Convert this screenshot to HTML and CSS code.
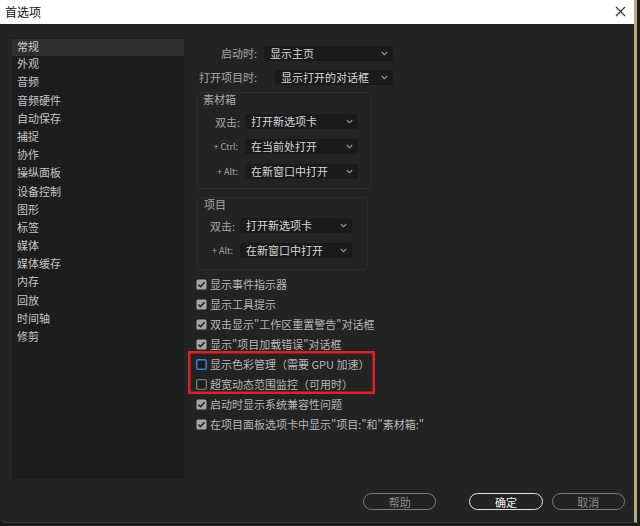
FILE: index.html
```html
<!DOCTYPE html>
<html lang="zh-CN">
<head>
    <meta charset="UTF-8">
    <meta name="viewport" content="width=device-width, initial-scale=1.0">
    <title>首选项</title>
    <link rel="stylesheet" href="styles.css">
</head>
<body>
    <div class="window">
        <div class="titlebar">
            <span class="title">首选项</span>
            <svg class="close" width="11" height="11" viewBox="0 0 11 11"><path d="M1 1 L10 10 M10 1 L1 10" stroke="#333" stroke-width="1.1" fill="none"/></svg>
        </div>

        <div class="main">
            <ul class="nav">
                <li class="active">常规</li>
                <li>外观</li>
                <li>音频</li>
                <li>音频硬件</li>
                <li>自动保存</li>
                <li>捕捉</li>
                <li>协作</li>
                <li>操纵面板</li>
                <li>设备控制</li>
                <li>图形</li>
                <li>标签</li>
                <li>媒体</li>
                <li>媒体缓存</li>
                <li>内存</li>
                <li>回放</li>
                <li>时间轴</li>
                <li>修剪</li>
            </ul>

            <div class="panel">
                <div class="row">
                    <span class="label">启动时:</span>
                    <div class="select w1">显示主页<svg class="chev" width="7" height="5" viewBox="0 0 7 5"><path d="M0.8 1 L3.5 3.8 L6.2 1" stroke="#9a9a9a" stroke-width="1.1" fill="none"/></svg></div>
                </div>
                <div class="row">
                    <span class="label">打开项目时:</span>
                    <div class="select w2">显示打开的对话框<svg class="chev" width="7" height="5" viewBox="0 0 7 5"><path d="M0.8 1 L3.5 3.8 L6.2 1" stroke="#9a9a9a" stroke-width="1.1" fill="none"/></svg></div>
                </div>

                <div class="group bin">
                    <div class="group-title">素材箱</div>
                    <div class="grow">
                        <span class="glabel">双击:</span>
                        <div class="select gsel">打开新选项卡<svg class="chev" width="7" height="5" viewBox="0 0 7 5"><path d="M0.8 1 L3.5 3.8 L6.2 1" stroke="#9a9a9a" stroke-width="1.1" fill="none"/></svg></div>
                    </div>
                    <div class="grow">
                        <span class="glabel small">+ Ctrl:</span>
                        <div class="select gsel">在当前处打开<svg class="chev" width="7" height="5" viewBox="0 0 7 5"><path d="M0.8 1 L3.5 3.8 L6.2 1" stroke="#9a9a9a" stroke-width="1.1" fill="none"/></svg></div>
                    </div>
                    <div class="grow">
                        <span class="glabel small">+ Alt:</span>
                        <div class="select gsel">在新窗口中打开<svg class="chev" width="7" height="5" viewBox="0 0 7 5"><path d="M0.8 1 L3.5 3.8 L6.2 1" stroke="#9a9a9a" stroke-width="1.1" fill="none"/></svg></div>
                    </div>
                </div>

                <div class="group project">
                    <div class="group-title">项目</div>
                    <div class="grow">
                        <span class="glabel">双击:</span>
                        <div class="select gsel">打开新选项卡<svg class="chev" width="7" height="5" viewBox="0 0 7 5"><path d="M0.8 1 L3.5 3.8 L6.2 1" stroke="#9a9a9a" stroke-width="1.1" fill="none"/></svg></div>
                    </div>
                    <div class="grow">
                        <span class="glabel small">+ Alt:</span>
                        <div class="select gsel">在新窗口中打开<svg class="chev" width="7" height="5" viewBox="0 0 7 5"><path d="M0.8 1 L3.5 3.8 L6.2 1" stroke="#9a9a9a" stroke-width="1.1" fill="none"/></svg></div>
                    </div>
                </div>

                <div class="checks">
                    <div class="check"><svg class="box" width="11" height="11" viewBox="0 0 11 11"><rect x="0.5" y="0.5" width="10" height="10" rx="1.5" fill="#a6a6a6"/><path d="M2.4 5.6 L4.5 7.6 L8.6 3.2" stroke="#262626" stroke-width="1.6" fill="none"/></svg>显示事件指示器</div>
                    <div class="check"><svg class="box" width="11" height="11" viewBox="0 0 11 11"><rect x="0.5" y="0.5" width="10" height="10" rx="1.5" fill="#a6a6a6"/><path d="M2.4 5.6 L4.5 7.6 L8.6 3.2" stroke="#262626" stroke-width="1.6" fill="none"/></svg>显示工具提示</div>
                    <div class="check"><svg class="box" width="11" height="11" viewBox="0 0 11 11"><rect x="0.5" y="0.5" width="10" height="10" rx="1.5" fill="#a6a6a6"/><path d="M2.4 5.6 L4.5 7.6 L8.6 3.2" stroke="#262626" stroke-width="1.6" fill="none"/></svg>双击显示"工作区重置警告"对话框</div>
                    <div class="check"><svg class="box" width="11" height="11" viewBox="0 0 11 11"><rect x="0.5" y="0.5" width="10" height="10" rx="1.5" fill="#a6a6a6"/><path d="M2.4 5.6 L4.5 7.6 L8.6 3.2" stroke="#262626" stroke-width="1.6" fill="none"/></svg>显示"项目加载错误"对话框</div>
                    <div class="highlight">
                        <div class="check"><svg class="box" width="11" height="11" viewBox="0 0 11 11"><rect x="0.8" y="0.8" width="9.4" height="9.4" rx="1.2" fill="#1c1c1c" stroke="#3f80d8" stroke-width="1.5"/></svg>显示色彩管理（需要 GPU 加速）</div>
                        <div class="check"><svg class="box" width="11" height="11" viewBox="0 0 11 11"><rect x="0.7" y="0.7" width="9.6" height="9.6" rx="1.2" fill="#1e1e1e" stroke="#8c8c8c" stroke-width="1.1"/></svg>超宽动态范围监控（可用时）</div>
                    </div>
                    <div class="check"><svg class="box" width="11" height="11" viewBox="0 0 11 11"><rect x="0.5" y="0.5" width="10" height="10" rx="1.5" fill="#a6a6a6"/><path d="M2.4 5.6 L4.5 7.6 L8.6 3.2" stroke="#262626" stroke-width="1.6" fill="none"/></svg>启动时显示系统兼容性问题</div>
                    <div class="check"><svg class="box" width="11" height="11" viewBox="0 0 11 11"><rect x="0.5" y="0.5" width="10" height="10" rx="1.5" fill="#a6a6a6"/><path d="M2.4 5.6 L4.5 7.6 L8.6 3.2" stroke="#262626" stroke-width="1.6" fill="none"/></svg>在项目面板选项卡中显示"项目:"和"素材箱:"</div>
                </div>
            </div>
        </div>

        <div class="footer">
            <button class="btn help">帮助</button>
            <button class="btn primary">确定</button>
            <button class="btn">取消</button>
        </div>
    </div>
</body>
</html>
```

FILE: styles.css
```css
html, body {
    margin: 0;
    padding: 0;
    background-color: #1b1b1b;
    font-family: "Noto Sans CJK SC", "Noto Sans", sans-serif;
    font-size: 11px;
}

.window {
    width: 637px;
    height: 523px;
    background-color: #232323;
    border-right: 3px solid #b8a887;
    border-bottom: 1px solid #3a3a3a;
    border-bottom-left-radius: 6px;
    display: flex;
    flex-direction: column;
    box-sizing: border-box;
    overflow: hidden;
}

.titlebar {
    height: 22px;
    background-color: #fff;
    display: flex;
    align-items: center;
    justify-content: space-between;
    padding: 0 8px 2px 5px;
    flex-shrink: 0;
}
.title {
    color: #111;
    font-size: 12px;
}

.main {
    display: flex;
    padding: 14px 0 0 12px;
}

.nav {
    list-style: none;
    margin: 0;
    padding: 0;
    width: 172px;
    height: 441px;
    background-color: #1c1c1c;
}
.nav li {
    height: 18.2px;
    line-height: 14px;
    box-sizing: border-box;
    padding: 0 0 0 5px;
    color: #c4c4c4;
}
.nav li.active {
    background-color: #2f2f2f;
    color: #d0d0d0;
    margin-top: 1px;
    height: 17.2px;
}

.panel {
    margin-left: 12px;
    padding-top: 7px;
}

.row {
    display: flex;
    align-items: center;
    height: 16px;
    margin-bottom: 8px;
}
.row + .row {
    margin-bottom: 7px;
}
.label {
    width: 61px;
    text-align: right;
    color: #a6a6a6;
}

.select {
    position: relative;
    height: 15px;
    line-height: 14px;
    background-color: #1a1a1a;
    color: #d6d6d6;
    padding-left: 6px;
    box-sizing: border-box;
    border-radius: 2px;
}
.chev {
    position: absolute;
    right: 5px;
    top: 5px;
}
.w1 {
    margin-left: 7px;
    width: 129px;
}
.w2 {
    margin-left: 18px;
    width: 118px;
}

.group {
    margin-left: 1px;
    border: 1px solid #2e2e2e;
    border-radius: 4px;
    box-sizing: border-box;
    padding: 0;
}
.group-title {
    color: #a8a8a8;
    height: 14px;
    line-height: 12px;
    padding-left: 5px;
}
.bin {
    width: 175px;
    height: 97px;
}
.project {
    width: 171px;
    height: 73px;
    margin-top: 8px;
}
.bin .group-title {
    margin-bottom: 7px;
}
.project .group-title {
    margin-bottom: 6px;
    padding-left: 6px;
}

.grow {
    display: flex;
    align-items: center;
    height: 15px;
    line-height: 14px;
    margin-bottom: 10px;
}
.glabel {
    width: 42px;
    text-align: right;
    color: #a6a6a6;
}
.glabel.small {
    font-size: 9px;
    padding-right: 2px;
    width: 40px;
}
.bin .gsel {
    margin-left: 5px;
    width: 113px;
}
.project .glabel {
    width: 37px;
}
.project .glabel.small {
    width: 35px;
}
.project .gsel {
    margin-left: 5px;
    width: 112px;
}

.checks {
    margin-top: 4px;
}
.check {
    display: flex;
    align-items: center;
    height: 20px;
    line-height: 18px;
    color: #b6b6b6;
}
.box {
    margin-right: 3px;
    flex-shrink: 0;
}

.highlight {
    margin-left: -8px;
    padding-left: 8px;
    width: 187px;
    box-sizing: border-box;
    box-shadow: inset 0 0 0 2.5px #dd2127;
    margin-top: -3px;
    padding-top: 3px;
}

.footer {
    margin-top: auto;
    display: flex;
    padding: 0 0 12px 363px;
}
.btn {
    width: 74px;
    height: 17px;
    border: 1.5px solid #7c7c7c;
    border-radius: 9px;
    background: transparent;
    color: #8a8a8a;
    font-family: inherit;
    font-size: 11px;
    padding: 0;
    line-height: 14px;
    margin-right: 9px;
}
.help {
    margin-right: 33px;
}
.primary {
    border-color: #e4e4e4;
    color: #f0f0f0;
}
```
